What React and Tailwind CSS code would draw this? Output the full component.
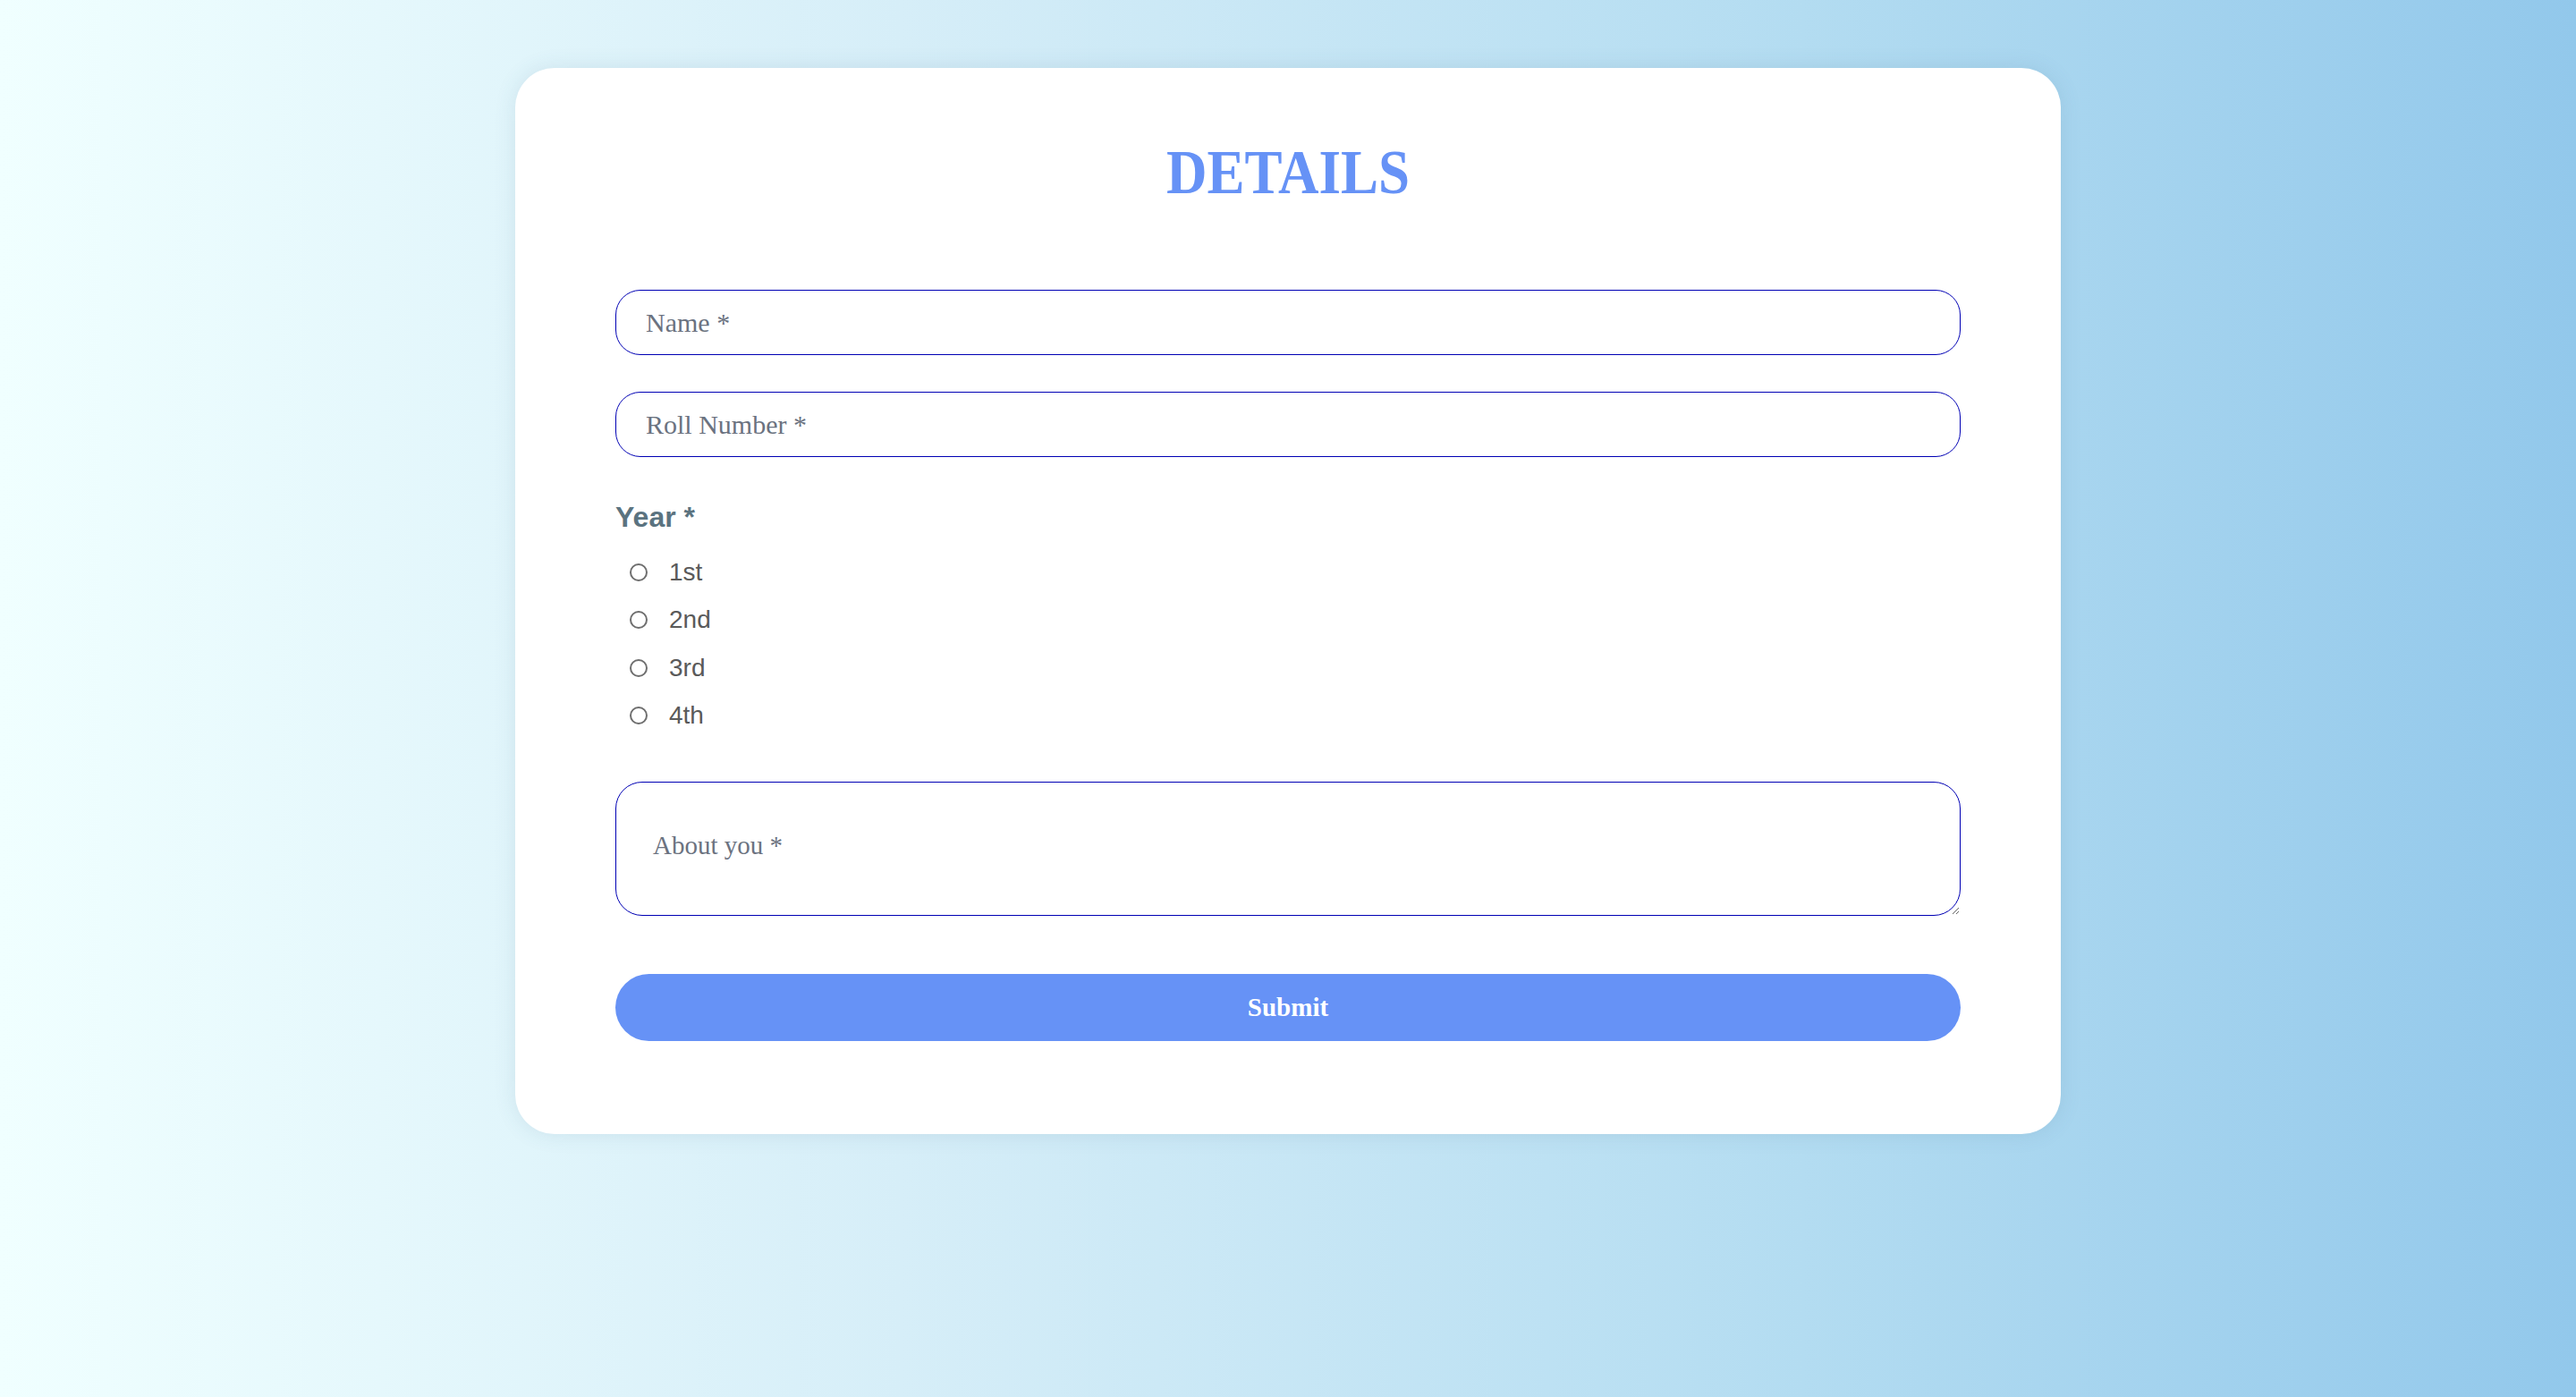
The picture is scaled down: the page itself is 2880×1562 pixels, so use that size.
import React from "react";

export default function App() {
  const years = ["1st", "2nd", "3rd", "4th"];
  return (
    <div
      className="min-h-[1562px] w-full bg-[linear-gradient(to_right,#f0ffff_0%,#d6eef8_35%,#b3dcf1_70%,#92c8eb_100%)] pt-[76px]"
      style={{ fontFamily: '"Liberation Serif", "Times New Roman", serif' }}
    >
      <div className="mx-auto w-[1728px] rounded-[44px] bg-white px-[112px] pt-[82px] pb-[104px] shadow-[0_0_24px_rgba(60,100,130,0.12)]">
        <h1 className="text-center text-[70px] font-bold leading-[70px] text-[#6692f6]">
          <span className="inline-block scale-x-[0.9]">DETAILS</span>
        </h1>

        <form className="mt-[96px] flex flex-col" onSubmit={(e) => e.preventDefault()}>
          <input
            type="text"
            placeholder="Name *"
            className="h-[73px] w-full rounded-[28px] border border-[#0000b4] bg-white pl-[33px] text-[30px] text-[#374151] outline-none placeholder:text-[#6b7280]"
            style={{ fontFamily: '"Liberation Serif", "Times New Roman", serif' }}
          />
          <input
            type="text"
            placeholder="Roll Number *"
            className="mt-[41px] h-[73px] w-full rounded-[28px] border border-[#0000b4] bg-white pl-[33px] text-[30px] text-[#374151] outline-none placeholder:text-[#6b7280]"
            style={{ fontFamily: '"Liberation Serif", "Times New Roman", serif' }}
          />

          <div
            className="mt-[51px] text-[32px] font-bold leading-[32px] text-[#5b7380]"
            style={{ fontFamily: '"Liberation Sans", Arial, sans-serif' }}
          >
            Year *
          </div>

          <div className="mt-[19px] flex flex-col">
            {years.map((y) => (
              <label
                key={y}
                className="flex h-[53.5px] items-center pl-[16px] text-[28px] text-[#5a5a5a]"
                style={{ fontFamily: '"Liberation Sans", Arial, sans-serif' }}
              >
                <input
                  type="radio"
                  name="year"
                  className="m-0 h-[20px] w-[20px] appearance-none rounded-full border-2 border-[#6f6f6f] bg-white"
                />
                <span className="ml-[24px]">{y}</span>
              </label>
            ))}
          </div>

          <textarea
            placeholder="About you *"
            className="mt-[47px] h-[150px] w-full rounded-[30px] border border-[#0000b4] bg-white pl-[41px] pt-[52px] text-[29px] leading-[36px] text-[#374151] outline-none placeholder:text-[#6b7280]"
            style={{ fontFamily: '"Liberation Serif", "Times New Roman", serif' }}
          />

          <button
            type="submit"
            className="mt-[65px] h-[75px] w-full rounded-full bg-[#6692f6] text-[29px] font-bold leading-[29px] text-white"
            style={{ fontFamily: '"Liberation Serif", "Times New Roman", serif' }}
          >
            Submit
          </button>
        </form>
      </div>
    </div>
  );
}
